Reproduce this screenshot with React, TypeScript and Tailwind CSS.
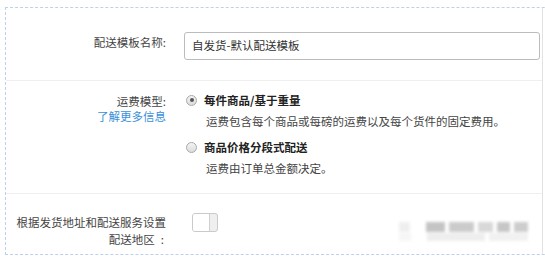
import React from 'react'

const Radio = ({checked}: {checked?: boolean}) => (
  <span className="flex h-[11px] w-[11px] shrink-0 items-center justify-center rounded-full border border-[#a9a9a9] bg-gradient-to-b from-[#f4f4f4] to-[#dcdcdc]">
    {checked && <span className="h-[4px] w-[4px] rounded-full bg-[#555]" />}
  </span>
)

const ShippingOption = ({title, desc, checked, className}: {title: string; desc: string; checked?: boolean; className?: string}) => (
  <div className={className}>
    <div className="flex items-center">
      <span className="ml-[2px]"><Radio checked={checked} /></span>
      <span className="ml-[7px] text-[11.5px] leading-[16px] font-bold text-[#222]">{title}</span>
    </div>
    <p className="mt-[5px] pl-[22px] text-[11.5px] leading-[16px] text-[#444]">{desc}</p>
  </div>
)

const App = () => {
  return (
    <div className="h-[258px] w-[545px] overflow-hidden bg-white pl-[5px] pt-[7px] font-['Noto_Sans_CJK_SC','Liberation_Sans',sans-serif] text-[#444]">
      <div className="h-[248px] w-[620px] border border-dashed border-[#bcd1ee]">
        <div className="flex h-full w-[537px] flex-col border-r border-[#e2e2e2]">
          {/* template name */}
          <div className="flex h-[73px] shrink-0 items-start border-b border-[#efefef]">
            <label className="w-[160px] pt-[26px] text-right text-[11.5px] leading-[16px]">配送模板名称:</label>
            <div className="ml-[18px] mt-[24px] flex h-[28px] w-[356px] items-center rounded-[3px] border border-[#bcbcbc] pl-[7px] text-[11.5px] text-[#333]">
              自发货-默认配送模板
            </div>
          </div>

          {/* shipping model */}
          <div className="flex h-[113px] shrink-0 items-start border-b border-[#efefef]">
            <div className="w-[160px] pt-[13px] text-right text-[11.5px] leading-[15px]">
              <div>运费模型:</div>
              <a className="text-[#3a90d8]">了解更多信息</a>
            </div>
            <div className="ml-[18px] pt-[11px]">
              <ShippingOption checked title="每件商品/基于重量" desc="运费包含每个商品或每磅的运费以及每个货件的固定费用。" />
              <ShippingOption className="mt-[10px]" title="商品价格分段式配送" desc="运费由订单总金额决定。" />
            </div>
          </div>

          {/* shipping regions */}
          <div className="flex flex-1 items-start">
            <div className="w-[160px] pt-[20px] text-right text-[11.5px] leading-[16.5px]">
              <div className="whitespace-nowrap">根据发货地址和配送服务设置</div>
              <div>配送地区<span className="ml-[6px] mr-[2px]">:</span></div>
            </div>
            <button className="ml-[26px] mt-[19px] flex h-[19px] w-[26px] overflow-hidden rounded-[3px] border border-[#cacaca] bg-[#efefef]">
              <span className="h-full w-[17px] border-r border-[#cfcfcf] bg-white" />
            </button>
            <div className="ml-auto mr-[14px] mt-[28px] flex w-[129px] flex-col gap-[1px] blur-[1.5px]">
              <div className="flex h-[10px] gap-[4px]">
                <span className="w-[12px] bg-[#efefef]" />
                <span className="ml-[12px] w-[20px] bg-[#c4c4c4]" />
                <span className="w-[28px] bg-[#cbcbcb]" />
                <span className="w-[16px] bg-[#d8d8d8]" />
                <span className="w-[14px] bg-[#c6c6c6]" />
                <span className="w-[15px] bg-[#cdcdcd]" />
              </div>
              <div className="flex h-[8px] gap-[4px]">
                <span className="w-[12px] bg-[#f6f6f6]" />
                <span className="ml-[12px] w-[60px] bg-[#eeeeee]" />
                <span className="w-[40px] bg-[#f1f1f1]" />
              </div>
            </div>
          </div>
        </div>
      </div>
    </div>
  )
}

export default App
